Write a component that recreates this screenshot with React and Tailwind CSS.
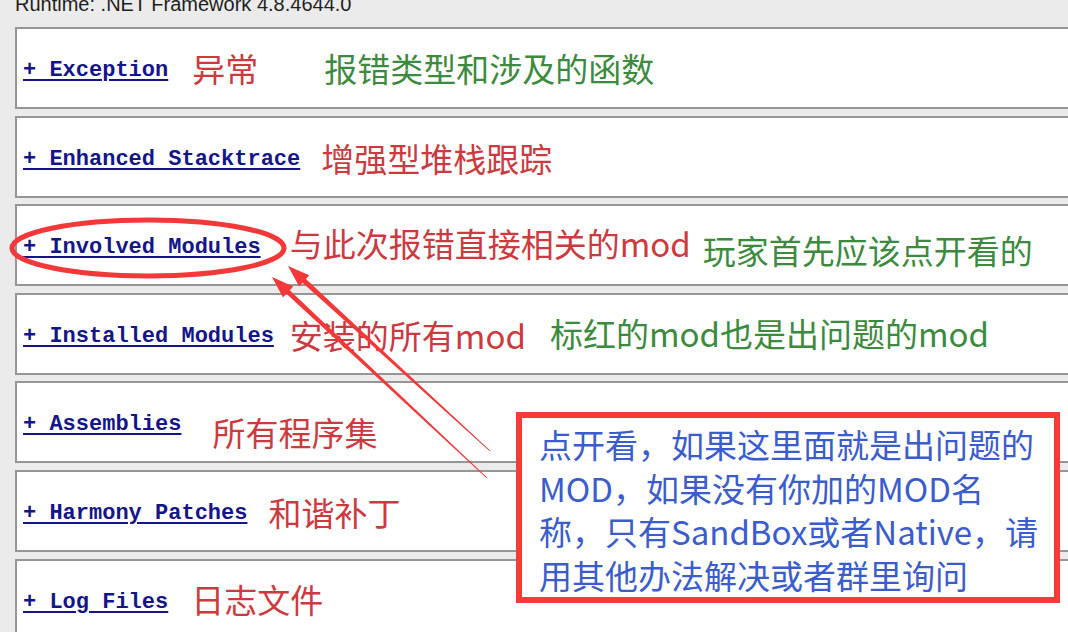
import React from "react";

const RED = "text-[#cc3a3f]";
const GREEN = "text-[#3c8a3d]";

const rows = [
  {
    label: "+ Exception",
    notes: [
      { text: "异常", cls: `${RED} ml-[24px] mt-[1px]` },
      { text: "报错类型和涉及的函数", cls: `${GREEN} ml-[66px] mt-[1px]` },
    ],
  },
  {
    label: "+ Enhanced Stacktrace",
    notes: [{ text: "增强型堆栈跟踪", cls: `${RED} ml-[21px] mt-[4px]` }],
  },
  {
    label: "+ Involved Modules",
    notes: [
      { text: "与此次报错直接相关的mod", cls: `${RED} ml-[29px] -mt-[3px]` },
      { text: "玩家首先应该点开看的", cls: `${GREEN} ml-[12px] mt-[11px]` },
    ],
  },
  {
    label: "+ Installed Modules",
    notes: [
      { text: "安装的所有mod", cls: `${RED} ml-[16px] mt-[4px]` },
      { text: "标红的mod也是出问题的mod", cls: `${GREEN} ml-[24px]` },
    ],
  },
  {
    label: "+ Assemblies",
    notes: [{ text: "所有程序集", cls: `${RED} ml-[31px] mt-[20px]` }],
  },
  {
    label: "+ Harmony Patches",
    notes: [{ text: "和谐补丁", cls: `${RED} ml-[21px] mt-[3px]` }],
  },
  {
    label: "+ Log Files",
    notes: [{ text: "日志文件", cls: `${RED} ml-[23px]` }],
  },
];

// tapered arrow: thick near the head, thin at the tail
const arrowPoints = (tip, tail) => {
  const dx = tail[0] - tip[0];
  const dy = tail[1] - tip[1];
  const len = Math.hypot(dx, dy);
  const u = [dx / len, dy / len];
  const p = [-u[1], u[0]];
  const headLen = 22;
  const headW = 15;
  const shaftHead = 5;
  const shaftTail = 1;
  const b = [tip[0] + u[0] * headLen, tip[1] + u[1] * headLen];
  const pt = (c, w) => [c[0] + p[0] * w, c[1] + p[1] * w];
  return [
    tip,
    pt(b, headW / 2),
    pt(b, shaftHead / 2),
    pt(tail, shaftTail / 2),
    pt(tail, -shaftTail / 2),
    pt(b, -shaftHead / 2),
    pt(b, -headW / 2),
  ]
    .map((q) => q.join(","))
    .join(" ");
};

const Row = ({ label, notes }) => (
  <div className="h-[82px] flex items-center border-2 border-r-0 border-[#969696] bg-white pl-[6px] shrink-0">
    <a
      href="#"
      className="mt-[6px] font-['Liberation_Mono',monospace] font-bold text-[22px] leading-none text-[#15158a] underline decoration-2 underline-offset-[3px] whitespace-pre"
    >
      {label}
    </a>
    {notes.map((n) => (
      <span
        key={n.text}
        className={`font-['Noto_Sans_CJK_SC',sans-serif] text-[33px] leading-none whitespace-nowrap ${n.cls}`}
      >
        {n.text}
      </span>
    ))}
  </div>
);

export default function App() {
  return (
    <div className="relative w-[1068px] h-[632px] overflow-hidden bg-[#ebebeb]">
      {/* header line, cut off at the top */}
      <div className="h-[27px] pl-[15px] overflow-hidden">
        <div className="-mt-[6px] font-['Liberation_Sans',sans-serif] text-[20px] leading-[20px] text-[#1e1e1e]">
          Runtime: .NET Framework 4.8.4644.0
        </div>
      </div>

      <div className="flex flex-col gap-[6.6px] pl-[15px]">
        {rows.map((r) => (
          <Row key={r.label} {...r} />
        ))}
      </div>

      {/* callout box */}
      <div className="absolute left-[516px] top-[412px] w-[544px] h-[191px] border-[6px] border-[#f73a3a] bg-white pl-[17px] pt-[5px]">
        <p className="font-['Noto_Sans_CJK_SC',sans-serif] text-[33px] leading-[43.5px] text-[#3a5ccd] whitespace-nowrap">
          点开看，如果这里面就是出问题的
          <br />
          MOD，如果没有你加的MOD名
          <br />
          称，只有SandBox或者Native，请
          <br />
          用其他办法解决或者群里询问
        </p>
      </div>

      {/* circle + arrows */}
      <svg
        className="absolute inset-0 pointer-events-none"
        width="1068"
        height="632"
        viewBox="0 0 1068 632"
      >
        <ellipse
          cx="148"
          cy="248"
          rx="136"
          ry="28"
          fill="none"
          stroke="#f23838"
          strokeWidth="5"
        />
        <polygon points={arrowPoints([288, 266], [490, 451])} fill="#f23838" />
        <polygon points={arrowPoints([272, 277], [487, 478])} fill="#f23838" />
      </svg>
    </div>
  );
}
